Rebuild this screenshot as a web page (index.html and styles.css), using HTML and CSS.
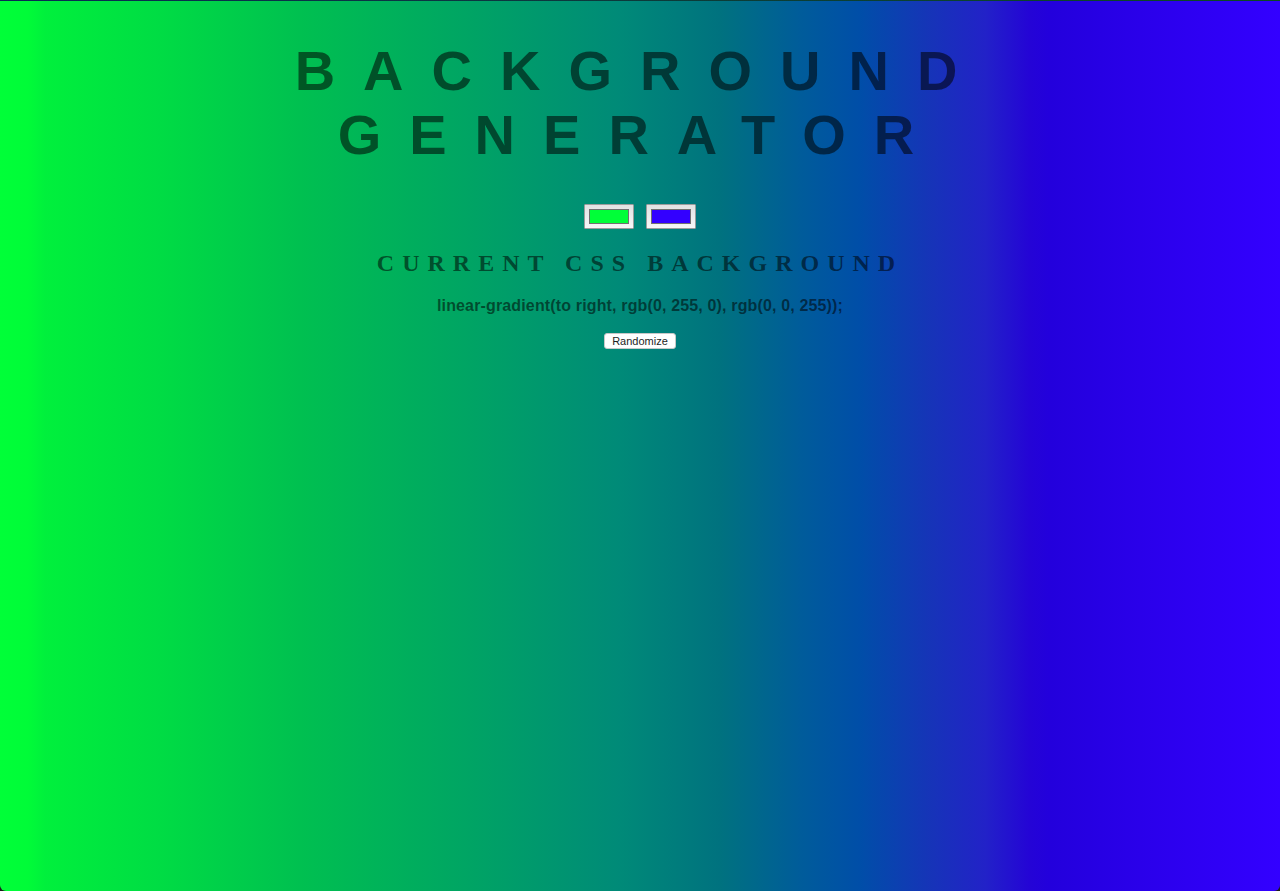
FILE: index.html
```html
<!DOCTYPE html>
<html lang="en">
<head>
<meta charset="utf-8">
<title>Background Generator</title>
<link rel="stylesheet" href="styles.css">
</head>
<body class="page">
  <div class="frame-top"></div>
  <main class="content">
    <h1 class="title">BACKGROUND GENERATOR</h1>
    <div class="pickers">
      <input class="picker" type="color" value="#00ff38" name="color1">
      <input class="picker" type="color" value="#3300ff" name="color2">
    </div>
    <h3 class="subtitle">Current CSS Background</h3>
    <p class="css-value">linear-gradient(to right, rgb(0, 255, 0), rgb(0, 0, 255));</p>
    <button class="randomize" type="button">Randomize</button>
  </main>
</body>
</html>
```

FILE: styles.css
```css
html {
  height: 100%;
  background: #1c1c1c;
}

.page {
  margin: 0;
  min-height: 891px;
  box-sizing: border-box;
  border-radius: 0 0 6px 6px;
  overflow: hidden;
  background: linear-gradient(to right,
    #00ff38 0px,
    #00fc38 28px,
    #00f03c 45px,
    #00dc44 160px,
    #00c050 300px,
    #00a464 470px,
    #008a78 620px,
    #00727f 720px,
    #005c9a 800px,
    #004ea8 860px,
    #1634b8 930px,
    #2222c8 985px,
    #2404d6 1030px,
    #2300dc 1050px,
    #2a00ea 1140px,
    #3300ff 1280px);
  font-family: "Liberation Sans", Arial, sans-serif;
  color: rgba(0, 0, 0, 0.55);
}

.frame-top {
  height: 1px;
  background: linear-gradient(to right, #0a2a55, #0c3a3a, #0a4a22);
}

.content {
  display: flex;
  flex-direction: column;
  align-items: center;
  padding-top: 38px;
}

.title {
  margin: 0;
  width: 1264px;
  font-size: 56px;
  font-weight: bold;
  letter-spacing: 0.5em;
  text-align: center;
  line-height: 64px;
}

.pickers {
  display: flex;
  gap: 12px;
  margin-top: 37px;
}

.picker {
  -webkit-appearance: none;
  appearance: none;
  box-sizing: border-box;
  width: 50px;
  height: 25px;
  padding: 4px;
  margin: 0;
  border: 1px solid #9c9c9c;
  border-radius: 1px;
  background: linear-gradient(to bottom, #e2e2e2, #f7f7f7);
  cursor: pointer;
}

.picker::-webkit-color-swatch-wrapper {
  padding: 0;
}

.picker::-webkit-color-swatch {
  border: 1px solid #707070;
  border-radius: 0;
}

.subtitle {
  margin: 21px 0 0;
  font-family: "Liberation Serif", "Times New Roman", serif;
  font-size: 24px;
  font-weight: bold;
  text-transform: uppercase;
  letter-spacing: 8px;
  text-align: center;
}

.css-value {
  margin: 20px 0 0;
  font-size: 16px;
  font-weight: bold;
  letter-spacing: 0.15px;
  text-align: center;
}

.randomize {
  margin-top: 18px;
  box-sizing: border-box;
  width: 72px;
  height: 16px;
  padding: 0;
  border: 1px solid #c8c8c8;
  border-radius: 3px;
  background: #ffffff;
  color: #1e1e1e;
  font-family: "Liberation Sans", Arial, sans-serif;
  font-size: 11px;
  line-height: 14px;
}
```
